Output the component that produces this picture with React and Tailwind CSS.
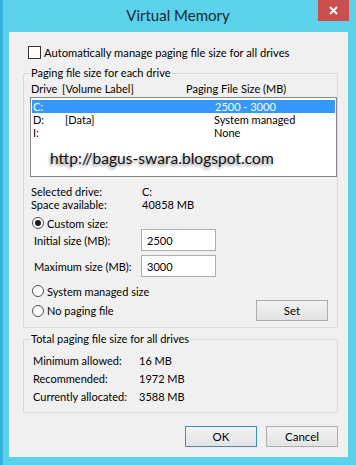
import React from "react";

const font = { fontFamily: "Lato, 'Liberation Sans', Arial, sans-serif" };

function Radio({ checked }) {
  return (
    <span className="w-[12px] h-[12px] rounded-full border border-[#4d4d4d] bg-white flex items-center justify-center shrink-0">
      {checked && <span className="w-[6px] h-[6px] rounded-full bg-[#1a1a1a]" />}
    </span>
  );
}

function Button({ children, focused }) {
  return (
    <button
      className={
        "w-[72px] h-[21px] text-[11.5px] leading-[13px] text-black bg-gradient-to-b from-[#f2f2f2] to-[#e3e3e3] border " +
        (focused ? "border-[#3c8ad6]" : "border-[#acacac]")
      }
    >
      {children}
    </button>
  );
}

function Group({ label, className, children }) {
  return (
    <div className={"relative border border-[#d9d9d9] rounded-[2px] " + className}>
      {/* caption sits over the top border */}
      <span className="absolute -top-[8px] left-[6px] px-[1px] bg-[#f0f0f0] leading-[14px]">
        {label}
      </span>
      {children}
    </div>
  );
}

export default function App() {
  return (
    <div
      className="w-[356px] h-[465px] bg-[#5bd1ea] border-l-[3px] border-[#35b2de] flex flex-col text-black"
      style={font}
    >
      {/* Title bar */}
      <div className="relative h-[32px] shrink-0 flex items-center justify-center pr-[3px]">
        <span className="text-[15px] text-[#1c2a33] -mt-[1px]">Virtual Memory</span>
        <div className="absolute top-0 right-[7px] w-[31px] h-[21px] bg-[#c9504f] flex items-center justify-center">
          <svg width="9" height="9" viewBox="0 0 9 9">
            <path d="M1 1 L8 8 M8 1 L1 8" stroke="white" strokeWidth="1.8" />
          </svg>
        </div>
      </div>

      {/* Dialog body */}
      <div className="ml-[6px] mr-[8px] h-[425px] bg-[#f0f0f0] flex flex-col text-[11px] leading-[13px]">
        <label className="mt-[14px] ml-[19px] h-[13px] flex items-center gap-[3px] text-[11.2px]">
          <span className="w-[13px] h-[13px] border border-[#333] bg-white shrink-0" />
          <span>Automatically manage paging file size for all drives</span>
        </label>

        <Group label="Paging file size for each drive" className="mt-[14px] ml-[14px] w-[315px] pb-[6px]">
          <div className="mt-[7px] h-[14px] flex items-center pl-[7px]">
            <span className="w-[31px]">Drive</span>
            <span className="w-[124px]">[Volume Label]</span>
            <span>Paging File Size (MB)</span>
          </div>

          <div className="mt-[2px] ml-[6px] w-[307px] h-[80px] border border-[#828790] bg-white pt-[2px] overflow-hidden">
            <div className="mx-[1px] h-[13px] bg-[#3399ff] text-white flex items-center pl-[1px]">
              <span className="w-[182px]">C:</span>
              <span>2500 - 3000</span>
            </div>
            <div className="h-[13px] flex items-center pl-[2px]">
              <span className="w-[32px]">D:</span>
              <span className="w-[149px]">[Data]</span>
              <span>System managed</span>
            </div>
            <div className="h-[13px] flex items-center pl-[2px]">
              <span className="w-[181px]">I:</span>
              <span>None</span>
            </div>
            <div className="mt-[10px] pl-[19px] text-[15.6px] leading-[18px] text-[#111] [text-shadow:-1px_2px_3px_rgba(0,0,0,0.45)]">
              http://bagus-swara.blogspot.com
            </div>
          </div>

          <div className="mt-[8px] pl-[7px]">
            <div className="h-[13px] flex items-center">
              <span className="w-[111px]">Selected drive:</span>
              <span>C:</span>
            </div>
            <div className="h-[13px] flex items-center">
              <span className="w-[111px]">Space available:</span>
              <span>40858 MB</span>
            </div>
          </div>

          <div className="mt-[6px] ml-[8px] h-[12px] flex items-center gap-[3px]">
            <Radio checked />
            <span>Custom size:</span>
          </div>

          <div className="ml-[10px] h-[22px] flex items-center">
            <span className="w-[107px]">Initial size (MB):</span>
            <div className="w-[75px] h-[22px] border border-[#abadb3] bg-white flex items-center pl-[5px]">2500</div>
          </div>
          <div className="mt-[4px] ml-[10px] h-[22px] flex items-center">
            <span className="w-[107px]">Maximum size (MB):</span>
            <div className="w-[75px] h-[22px] border border-[#abadb3] bg-white flex items-center pl-[5px]">3000</div>
          </div>

          <div className="mt-[7px] ml-[8px] h-[14px] flex items-center gap-[3px]">
            <Radio />
            <span>System managed size</span>
          </div>

          <div className="mt-[2px] ml-[8px] mr-[9px] h-[21px] flex items-center">
            <Radio />
            <span className="ml-[3px]">No paging file</span>
            <div className="ml-auto">
              <Button>Set</Button>
            </div>
          </div>
        </Group>

        <Group label="Total paging file size for all drives" className="mt-[11px] ml-[14px] w-[315px] pt-[11px] pb-[7px] pl-[9px]">
          <div className="h-[18px] flex items-center">
            <span className="w-[106px]">Minimum allowed:</span>
            <span>16 MB</span>
          </div>
          <div className="h-[18px] flex items-center">
            <span className="w-[106px]">Recommended:</span>
            <span>1972 MB</span>
          </div>
          <div className="h-[18px] flex items-center">
            <span className="w-[106px]">Currently allocated:</span>
            <span>3588 MB</span>
          </div>
        </Group>

        <div className="mt-[13px] pr-[10px] flex justify-end gap-[9px]">
          <Button focused>OK</Button>
          <Button>Cancel</Button>
        </div>
      </div>
    </div>
  );
}
